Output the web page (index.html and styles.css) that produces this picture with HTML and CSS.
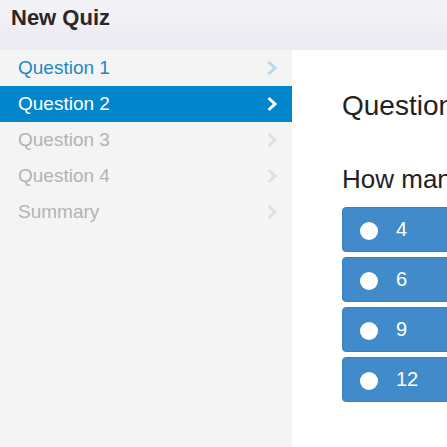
FILE: index.html
```html
<!DOCTYPE html>
<html>
<head>
<meta charset="utf-8">
<link rel="stylesheet" href="styles.css">
</head>
<body>
<div class="app">
  <header class="topbar"><h1 class="title">New Quiz</h1></header>
  <div class="layout">
    <nav class="sidebar">
      <div class="nav-item visited"><span>Question 1</span><svg class="chev" width="12" height="16" viewBox="0 0 12 16"><polyline points="2.5,2 9,8 2.5,14" fill="none" stroke="currentColor" stroke-width="3"/></svg></div>
      <div class="nav-item active"><span>Question 2</span><svg class="chev" width="12" height="16" viewBox="0 0 12 16"><polyline points="2.5,2 9,8 2.5,14" fill="none" stroke="currentColor" stroke-width="3"/></svg></div>
      <div class="nav-item"><span>Question 3</span><svg class="chev" width="12" height="16" viewBox="0 0 12 16"><polyline points="2.5,2 9,8 2.5,14" fill="none" stroke="currentColor" stroke-width="3"/></svg></div>
      <div class="nav-item"><span>Question 4</span><svg class="chev" width="12" height="16" viewBox="0 0 12 16"><polyline points="2.5,2 9,8 2.5,14" fill="none" stroke="currentColor" stroke-width="3"/></svg></div>
      <div class="nav-item"><span>Summary</span><svg class="chev" width="12" height="16" viewBox="0 0 12 16"><polyline points="2.5,2 9,8 2.5,14" fill="none" stroke="currentColor" stroke-width="3"/></svg></div>
    </nav>
    <main class="content">
      <h2 class="q-title">Question 2</h2>
      <p class="q-text">How many sides does a hexagon have?</p>
      <div class="answers">
        <div class="answer"><span class="dot"></span><span class="label">4</span></div>
        <div class="answer"><span class="dot"></span><span class="label">6</span></div>
        <div class="answer"><span class="dot"></span><span class="label">9</span></div>
        <div class="answer"><span class="dot"></span><span class="label">12</span></div>
      </div>
    </main>
  </div>
</div>
</body>
</html>
```
FILE: styles.css
```css
html, body {
  margin: 0;
  padding: 0;
  width: 447px;
  height: 447px;
  overflow: hidden;
  background: #ffffff;
  font-family: "Liberation Sans", Arial, sans-serif;
}
.app {
  display: flex;
  flex-direction: column;
  height: 447px;
}
.topbar {
  height: 50px;
  flex: 0 0 50px;
  background: linear-gradient(to bottom, #f4f3f7, #ebeaf3);
  display: flex;
  align-items: center;
  padding-left: 11px;
  box-sizing: border-box;
}
.title {
  margin: 0;
  font-size: 22px;
  font-weight: bold;
  color: #2b2724;
  line-height: 26px;
  position: relative;
  top: -7px;
}
.layout {
  display: flex;
  flex: 1;
  min-height: 0;
}
.sidebar {
  width: 292px;
  flex: 0 0 292px;
  background: #f4f4f4;
}
.nav-item {
  height: 36px;
  display: flex;
  align-items: center;
  justify-content: space-between;
  padding: 0 14px 0 18px;
  font-size: 19px;
  color: #b3b3b3;
}
.nav-item .chev {
  color: #e0e0e0;
}
.nav-item.visited {
  color: #2388c6;
}
.nav-item.visited .chev {
  color: #b9d8ec;
}
.nav-item.active {
  background: #0286cb;
  color: #ffffff;
}
.nav-item.active .chev {
  color: #ffffff;
}
.content {
  flex: 0 0 auto;
  width: 420px;
  padding: 40px 0 0 50px;
  white-space: nowrap;
}
.q-title {
  margin: 0;
  font-size: 28px;
  font-weight: normal;
  line-height: 32px;
  color: #222222;
}
.q-text {
  margin: 42px 0 0 0;
  font-size: 26px;
  line-height: 30px;
  color: #222222;
}
.answers {
  margin-top: 13px;
  display: flex;
  flex-direction: column;
  gap: 5px;
}
.answer {
  height: 45px;
  box-sizing: border-box;
  background: #428bca;
  border: 1px solid #3a7fbb;
  border-radius: 4px;
  display: flex;
  align-items: center;
  padding-left: 17px;
  color: #ffffff;
  font-size: 20px;
}
.dot {
  width: 18px;
  height: 18px;
  border-radius: 50%;
  background: #ffffff;
  margin-right: 18px;
  position: relative;
  top: 1px;
}
```
